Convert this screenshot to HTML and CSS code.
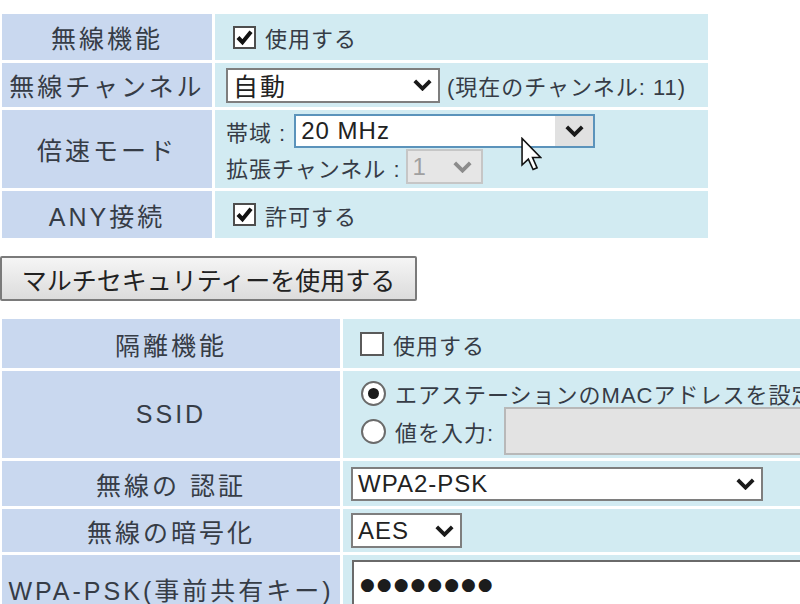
FILE: index.html
```html
<!DOCTYPE html>
<html lang="ja">

<head>
    <meta charset="UTF-8">
    <meta name="viewport" content="width=device-width, initial-scale=1.0">
    <title>無線設定</title>
    <link rel="stylesheet" href="styles.css">
</head>

<body>
    <div class="page">

        <table class="settings settings-top">
            <tr class="row-wireless">
                <th>無線機能</th>
                <td>
                    <label class="check-line">
                        <span class="checkbox">
                            <svg viewBox="0 0 16 16"><path d="M2.5 8 L6.3 12 L13.5 3.2" /></svg>
                        </span>
                        使用する
                    </label>
                </td>
            </tr>
            <tr class="row-channel">
                <th>無線チャンネル</th>
                <td>
                    <div class="field-line field-channel">
                        <div class="select select-channel">
                            <span>自動</span>
                            <svg class="chevron" viewBox="0 0 16 10"><path d="M1.5 1.5 L8 8 L14.5 1.5" /></svg>
                        </div>
                        <span class="note">(現在のチャンネル: 11)</span>
                    </div>
                </td>
            </tr>
            <tr class="row-speed">
                <th>倍速モード</th>
                <td>
                    <div class="field-line field-band">
                        <span>帯域 :</span>
                        <div class="select select-band">
                            <span>20 MHz</span>
                            <span class="select-arrow">
                                <svg class="chevron" viewBox="0 0 16 10"><path d="M1.5 1.5 L8 8 L14.5 1.5" /></svg>
                            </span>
                        </div>
                    </div>
                    <div class="field-line field-ext">
                        <span>拡張チャンネル :</span>
                        <div class="select select-ext">
                            <span>1</span>
                            <svg class="chevron" viewBox="0 0 16 10"><path d="M1.5 1.5 L8 8 L14.5 1.5" /></svg>
                        </div>
                    </div>
                </td>
            </tr>
            <tr class="row-any">
                <th>ANY接続</th>
                <td>
                    <label class="check-line">
                        <span class="checkbox">
                            <svg viewBox="0 0 16 16"><path d="M2.5 8 L6.3 12 L13.5 3.2" /></svg>
                        </span>
                        許可する
                    </label>
                </td>
            </tr>
        </table>

        <button class="multi-btn">マルチセキュリティーを使用する</button>

        <table class="settings settings-bottom">
            <tr class="row-isolate">
                <th>隔離機能</th>
                <td>
                    <label class="check-line">
                        <span class="checkbox checkbox-empty"></span>
                        使用する
                    </label>
                </td>
            </tr>
            <tr class="row-ssid">
                <th>SSID</th>
                <td>
                    <label class="radio-line">
                        <span class="radio radio-on"></span>
                        エアステーションのMACアドレスを設定
                    </label>
                    <label class="radio-line radio-line-input">
                        <span class="radio"></span>
                        値を入力:
                        <span class="text-input text-input-disabled"></span>
                    </label>
                </td>
            </tr>
            <tr class="row-auth">
                <th>無線の 認証</th>
                <td>
                    <div class="select select-auth">
                        <span>WPA2-PSK</span>
                        <svg class="chevron" viewBox="0 0 16 10"><path d="M1.5 1.5 L8 8 L14.5 1.5" /></svg>
                    </div>
                </td>
            </tr>
            <tr class="row-crypt">
                <th>無線の暗号化</th>
                <td>
                    <div class="select select-crypt">
                        <span>AES</span>
                        <svg class="chevron" viewBox="0 0 16 10"><path d="M1.5 1.5 L8 8 L14.5 1.5" /></svg>
                    </div>
                </td>
            </tr>
            <tr class="row-key">
                <th>WPA-PSK(事前共有キー)</th>
                <td>
                    <div class="text-input text-input-key">
                        <span class="key-dots">●●●●●●●●</span>
                    </div>
                </td>
            </tr>
        </table>

        <!-- mouse pointer over the band select -->
        <svg class="cursor" viewBox="0 0 12 19">
            <path d="M0.6 0.6 L0.6 15.8 L4.2 12.4 L6.9 18.4 L9.2 17.4 L6.6 11.5 L11.2 11.5 Z" />
        </svg>
    </div>
</body>

</html>
```

FILE: styles.css
```css
html,
body {
    margin: 0;
    overflow: hidden;
    background: #ffffff;
}

body {
    font-family: "Liberation Sans", "Noto Sans CJK JP", sans-serif;
    color: #363c46;
}

.page {
    position: relative;
    width: 920px;
    padding-top: 11px;
}

.settings {
    border-collapse: separate;
    border-spacing: 3px;
    margin-left: -1px;
    table-layout: fixed;
}

.settings th {
    background: #c9d8ef;
    font-weight: normal;
    font-size: 25px;
    letter-spacing: 3px;
    text-align: center;
    padding: 0;
    white-space: nowrap;
}

.settings td {
    background: #d2ebf2;
    font-size: 22px;
    letter-spacing: 1px;
    padding: 0;
    white-space: nowrap;
}

.settings-top {
    width: 712px;
}

.settings-top th {
    width: 210px;
}

.settings-bottom {
    width: 907px;
    margin-top: 15px;
}

.settings-bottom th {
    width: 338px;
}

/* row heights (cell padding is added on top) */
.row-wireless td {
    height: 46px;
}

.row-channel td {
    height: 44px;
}

.row-speed td {
    height: 74px;
}

.row-any td {
    height: 47px;
}

.row-isolate td {
    height: 49px;
}

.row-ssid td {
    height: 78px;
}

.row-auth td {
    height: 45px;
}

.row-crypt td {
    height: 43px;
}

.row-key td {
    height: 60px;
}

/* checkboxes and radios */
.check-line {
    display: flex;
    align-items: center;
    gap: 9px;
    padding-left: 18px;
}

.settings-bottom .check-line {
    padding-left: 17px;
}

.checkbox {
    display: inline-flex;
    align-items: center;
    justify-content: center;
    box-sizing: border-box;
    width: 23px;
    height: 23px;
    border: 2px solid #4e4e4e;
    background: #ffffff;
}

.checkbox svg {
    width: 19px;
    height: 19px;
}

.checkbox path {
    fill: none;
    stroke: #111111;
    stroke-width: 3.4;
}

.checkbox-empty {
    width: 24px;
    height: 24px;
    border-color: #5a5a5a;
}

.row-ssid td {
    vertical-align: top;
    padding-top: 9px;
}

.radio-line {
    display: flex;
    align-items: center;
    gap: 9px;
    height: 26px;
    padding-left: 18px;
}

.radio-line-input {
    height: 48px;
    margin-top: 1px;
}

.radio {
    box-sizing: border-box;
    width: 25px;
    height: 25px;
    border: 2px solid #6b6b6b;
    border-radius: 50%;
    background: #ffffff;
    display: inline-flex;
    align-items: center;
    justify-content: center;
}

.radio-on::after {
    content: "";
    width: 11px;
    height: 11px;
    border-radius: 50%;
    background: #1a1a1a;
}

/* text boxes */
.text-input {
    display: block;
    box-sizing: border-box;
    background: #ffffff;
}

.text-input-disabled {
    width: 400px;
    height: 48px;
    margin-left: 1px;
    background: #e3e3e3;
    border: 2px solid #b8b8b8;
}

.text-input-key {
    width: 600px;
    height: 62px;
    margin: 5px 0 0 9px;
    border: 2px solid #6a6a6a;
    padding: 8px 0 0 6px;
}

.key-dots {
    font-family: "DejaVu Sans", sans-serif;
    font-size: 17px;
    letter-spacing: 2px;
    color: #1c1c1c;
}

/* select boxes */
.field-line {
    display: flex;
    align-items: center;
    gap: 7px;
    padding-left: 11px;
}

.select {
    display: inline-flex;
    align-items: center;
    justify-content: space-between;
    box-sizing: border-box;
    height: 35px;
    border: 2px solid #7e7e7e;
    background: #ffffff;
    padding: 0 6px 0 5px;
    font-size: 24px;
    letter-spacing: 1px;
    color: #222222;
}

.chevron {
    width: 19px;
    height: 12px;
}

.chevron path {
    fill: none;
    stroke: #1a1a1a;
    stroke-width: 3.2;
}

.select-channel {
    width: 214px;
    font-size: 25px;
    letter-spacing: 2px;
}

.row-speed td {
    vertical-align: top;
    padding-top: 4px;
}

.field-band {
    gap: 8px;
}

.select-band {
    width: 301px;
    height: 34px;
    padding-right: 0;
    border-color: #5b93bb;
}

.select-arrow {
    display: flex;
    align-items: center;
    justify-content: center;
    width: 38px;
    height: 100%;
    background: #e1e1e1;
}

.field-ext {
    margin-top: 1px;
    gap: 5px;
}

.select-ext {
    width: 77px;
    background: #e6e6e6;
    border-color: #c6c6c6;
    color: #a0a0a0;
    padding-right: 9px;
}

.select-ext .chevron path {
    stroke: #8c8c8c;
}

.select-auth,
.select-crypt {
    margin-left: 8px;
}

.select-auth {
    width: 412px;
    height: 34px;
}

.select-crypt {
    width: 111px;
}

/* multi security button */
.multi-btn {
    display: block;
    box-sizing: border-box;
    width: 417px;
    height: 45px;
    margin: 15px 0 0 0;
    padding: 0;
    border: 2px solid #7a7a7a;
    border-radius: 2px;
    background: linear-gradient(#f5f5f5, #dcdcdc);
    font-family: "Liberation Sans", "Noto Sans CJK JP", sans-serif;
    font-size: 25px;
    color: #222222;
}

.cursor {
    position: absolute;
    left: 521px;
    top: 137px;
    width: 21px;
    height: 34px;
}

.cursor path {
    fill: #ffffff;
    stroke: #111111;
    stroke-width: 0.9;
    stroke-linejoin: miter;
}
```
